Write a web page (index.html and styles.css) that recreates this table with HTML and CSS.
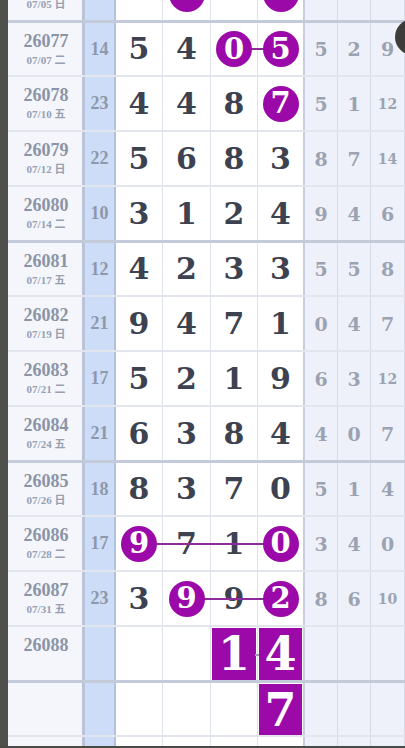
FILE: index.html
```html
<!DOCTYPE html>
<html lang="zh">
<head>
<meta charset="utf-8">
<title>走势图</title>
<link rel="stylesheet" href="styles.css">
</head>
<body>
<div class="screen">
  <div class="strip"></div>
  <div class="sheet">
    <div class="row">
      <div class="c issue"><span class="no"></span><span class="date">07/05 日</span></div>
      <div class="c sum"></div>
      <div class="c d"></div>
      <div class="c d lk-s"><span class="ball"></span></div>
      <div class="c d lk-m"></div>
      <div class="c d d4 lk-e"><span class="ball"></span></div>
      <div class="c r"></div>
      <div class="c r"></div>
      <div class="c r"></div>
    </div>
    <div class="row grp">
      <div class="c issue"><span class="no">26077</span><span class="date">07/07 二</span></div>
      <div class="c sum"><span>14</span></div>
      <div class="c d"><span class="n">5</span></div>
      <div class="c d"><span class="n">4</span></div>
      <div class="c d lk-s"><span class="ball">0</span></div>
      <div class="c d d4 lk-e"><span class="ball">5</span></div>
      <div class="c r"><span>5</span></div>
      <div class="c r"><span>2</span></div>
      <div class="c r"><span>9</span></div>
    </div>
    <div class="row">
      <div class="c issue"><span class="no">26078</span><span class="date">07/10 五</span></div>
      <div class="c sum"><span>23</span></div>
      <div class="c d"><span class="n">4</span></div>
      <div class="c d"><span class="n">4</span></div>
      <div class="c d"><span class="n">8</span></div>
      <div class="c d d4"><span class="ball">7</span></div>
      <div class="c r"><span>5</span></div>
      <div class="c r"><span>1</span></div>
      <div class="c r"><span class="sm">12</span></div>
    </div>
    <div class="row">
      <div class="c issue"><span class="no">26079</span><span class="date">07/12 日</span></div>
      <div class="c sum"><span>22</span></div>
      <div class="c d"><span class="n">5</span></div>
      <div class="c d"><span class="n">6</span></div>
      <div class="c d"><span class="n">8</span></div>
      <div class="c d d4"><span class="n">3</span></div>
      <div class="c r"><span>8</span></div>
      <div class="c r"><span>7</span></div>
      <div class="c r"><span class="sm">14</span></div>
    </div>
    <div class="row">
      <div class="c issue"><span class="no">26080</span><span class="date">07/14 二</span></div>
      <div class="c sum"><span>10</span></div>
      <div class="c d"><span class="n">3</span></div>
      <div class="c d"><span class="n">1</span></div>
      <div class="c d"><span class="n">2</span></div>
      <div class="c d d4"><span class="n">4</span></div>
      <div class="c r"><span>9</span></div>
      <div class="c r"><span>4</span></div>
      <div class="c r"><span>6</span></div>
    </div>
    <div class="row grp">
      <div class="c issue"><span class="no">26081</span><span class="date">07/17 五</span></div>
      <div class="c sum"><span>12</span></div>
      <div class="c d"><span class="n">4</span></div>
      <div class="c d"><span class="n">2</span></div>
      <div class="c d"><span class="n">3</span></div>
      <div class="c d d4"><span class="n">3</span></div>
      <div class="c r"><span>5</span></div>
      <div class="c r"><span>5</span></div>
      <div class="c r"><span>8</span></div>
    </div>
    <div class="row">
      <div class="c issue"><span class="no">26082</span><span class="date">07/19 日</span></div>
      <div class="c sum"><span>21</span></div>
      <div class="c d"><span class="n">9</span></div>
      <div class="c d"><span class="n">4</span></div>
      <div class="c d"><span class="n">7</span></div>
      <div class="c d d4"><span class="n">1</span></div>
      <div class="c r"><span>0</span></div>
      <div class="c r"><span>4</span></div>
      <div class="c r"><span>7</span></div>
    </div>
    <div class="row">
      <div class="c issue"><span class="no">26083</span><span class="date">07/21 二</span></div>
      <div class="c sum"><span>17</span></div>
      <div class="c d"><span class="n">5</span></div>
      <div class="c d"><span class="n">2</span></div>
      <div class="c d"><span class="n">1</span></div>
      <div class="c d d4"><span class="n">9</span></div>
      <div class="c r"><span>6</span></div>
      <div class="c r"><span>3</span></div>
      <div class="c r"><span class="sm">12</span></div>
    </div>
    <div class="row">
      <div class="c issue"><span class="no">26084</span><span class="date">07/24 五</span></div>
      <div class="c sum"><span>21</span></div>
      <div class="c d"><span class="n">6</span></div>
      <div class="c d"><span class="n">3</span></div>
      <div class="c d"><span class="n">8</span></div>
      <div class="c d d4"><span class="n">4</span></div>
      <div class="c r"><span>4</span></div>
      <div class="c r"><span>0</span></div>
      <div class="c r"><span>7</span></div>
    </div>
    <div class="row grp">
      <div class="c issue"><span class="no">26085</span><span class="date">07/26 日</span></div>
      <div class="c sum"><span>18</span></div>
      <div class="c d"><span class="n">8</span></div>
      <div class="c d"><span class="n">3</span></div>
      <div class="c d"><span class="n">7</span></div>
      <div class="c d d4"><span class="n">0</span></div>
      <div class="c r"><span>5</span></div>
      <div class="c r"><span>1</span></div>
      <div class="c r"><span>4</span></div>
    </div>
    <div class="row">
      <div class="c issue"><span class="no">26086</span><span class="date">07/28 二</span></div>
      <div class="c sum"><span>17</span></div>
      <div class="c d lk-s"><span class="ball">9</span></div>
      <div class="c d lk-m"><span class="n">7</span></div>
      <div class="c d lk-m"><span class="n">1</span></div>
      <div class="c d d4 lk-e"><span class="ball">0</span></div>
      <div class="c r"><span>3</span></div>
      <div class="c r"><span>4</span></div>
      <div class="c r"><span>0</span></div>
    </div>
    <div class="row">
      <div class="c issue"><span class="no">26087</span><span class="date">07/31 五</span></div>
      <div class="c sum"><span>23</span></div>
      <div class="c d"><span class="n">3</span></div>
      <div class="c d lk-s"><span class="ball">9</span></div>
      <div class="c d lk-m"><span class="n">9</span></div>
      <div class="c d d4 lk-e"><span class="ball">2</span></div>
      <div class="c r"><span>8</span></div>
      <div class="c r"><span>6</span></div>
      <div class="c r"><span class="sm">10</span></div>
    </div>
    <div class="row">
      <div class="c issue"><span class="no">26088</span><span class="date"></span></div>
      <div class="c sum"></div>
      <div class="c d"></div>
      <div class="c d"></div>
      <div class="c d sq-cell sq-s"><span class="sq">1</span></div>
      <div class="c d d4 sq-cell sq-e"><span class="sq">4</span></div>
      <div class="c r"></div>
      <div class="c r"></div>
      <div class="c r"></div>
    </div>
    <div class="row grp">
      <div class="c issue"></div>
      <div class="c sum"></div>
      <div class="c d"></div>
      <div class="c d"></div>
      <div class="c d"></div>
      <div class="c d d4 sq-cell"><span class="sq">7</span></div>
      <div class="c r"></div>
      <div class="c r"></div>
      <div class="c r"></div>
    </div>
    <div class="row">
      <div class="c issue"></div>
      <div class="c sum"></div>
      <div class="c d"></div>
      <div class="c d"></div>
      <div class="c d"></div>
      <div class="c d d4"></div>
      <div class="c r"></div>
      <div class="c r"></div>
      <div class="c r"></div>
    </div>
  </div>
  <div class="handle"></div>
</div>
<div class="bottombar"></div>
</body>
</html>
```

FILE: styles.css
```css
* { box-sizing: border-box; }
html, body { margin: 0; padding: 0; }
body {
  width: 405px;
  height: 748px;
  overflow: hidden;
  background: #ffffff;
  font-family: "Liberation Serif", "Noto Sans CJK SC", serif;
}
.screen {
  position: relative;
  display: flex;
  height: 746px;
  overflow: hidden;
}
.strip {
  flex: 0 0 8px;
  background: #4f504b;
}
.sheet {
  flex: 1 1 auto;
  margin-top: -35px;
  display: flex;
  flex-direction: column;
}
.row {
  display: grid;
  grid-template-columns: 77px 31px 47px 48px 47px 47px 33px 33px 34px;
  height: 55px;
  flex: 0 0 55px;
  border-top: 2px solid #e2e5ed;
}
.row.grp { border-top: 3px solid #c3cad9; }

.c {
  position: relative;
  display: flex;
  align-items: center;
  justify-content: center;
  border-right: 1px solid #dfe3eb;
}
.issue {
  flex-direction: column;
  background: #f4f6fc;
  border-right: 3px solid #b9c4da;
  padding-left: 2px;
}
.issue .no {
  display: block;
  height: 19px;
  font-weight: bold;
  font-size: 18px;
  line-height: 19px;
  color: #8b94a6;
}
.issue .date {
  display: block;
  height: 14px;
  margin-top: 2px;
  font-weight: bold;
  font-size: 11px;
  line-height: 14px;
  color: #979fb0;
}
.sum {
  background: #cddcf7;
  border-right: 2px solid #b3c1dc;
  font-weight: bold;
  font-size: 18px;
  color: #8e98ab;
}
.d { background: #ffffff; }
.d4 { border-right: 2px solid #c6cede; }
.r {
  background: #eef1f9;
  border-right: 1px solid #d4dae6;
  font-family: "DejaVu Serif", serif;
  font-weight: bold;
  font-size: 19px;
  color: #9ba3b3;
}
.r .sm { font-size: 14px; }

.n {
  position: relative;
  z-index: 1;
  font-family: "DejaVu Serif", serif;
  font-weight: bold;
  font-size: 30px;
  line-height: 1;
  color: #3c4250;
}
.ball {
  position: relative;
  z-index: 3;
  width: 36px;
  height: 36px;
  border-radius: 50%;
  background: #9b0aa8;
  color: #ffffff;
  display: flex;
  align-items: center;
  justify-content: center;
  font-family: "DejaVu Serif", serif;
  font-weight: bold;
  font-size: 29px;
  line-height: 1;
}
.lk-s::before, .lk-m::before, .lk-e::before {
  content: "";
  position: absolute;
  top: 50%;
  height: 2px;
  margin-top: -1px;
  background: #8c2b99;
  z-index: 2;
}
.lk-s::before { left: 50%; right: -1px; }
.lk-m::before { left: 0; right: -1px; }
.lk-e::before { left: 0; right: 50%; }

.sq-cell {
  align-items: stretch;
  padding: 1px 1px 0 1px;
}
.sq {
  position: relative;
  z-index: 3;
  flex: 1 1 auto;
  background: #9b0aa8;
  color: #ffffff;
  display: flex;
  align-items: center;
  justify-content: center;
  font-family: "DejaVu Serif", serif;
  font-weight: bold;
  font-size: 46px;
  line-height: 1;
}
.sq-s::after {
  content: "";
  position: absolute;
  right: -2px;
  top: 50%;
  width: 4px;
  height: 2px;
  background: #9aa0b0;
  z-index: 4;
}

.handle {
  position: absolute;
  right: -26px;
  top: 19px;
  width: 36px;
  height: 36px;
  border-radius: 50%;
  background: #3d3e3b;
}
.bottombar {
  height: 2px;
  background: #4a4b47;
}
```
